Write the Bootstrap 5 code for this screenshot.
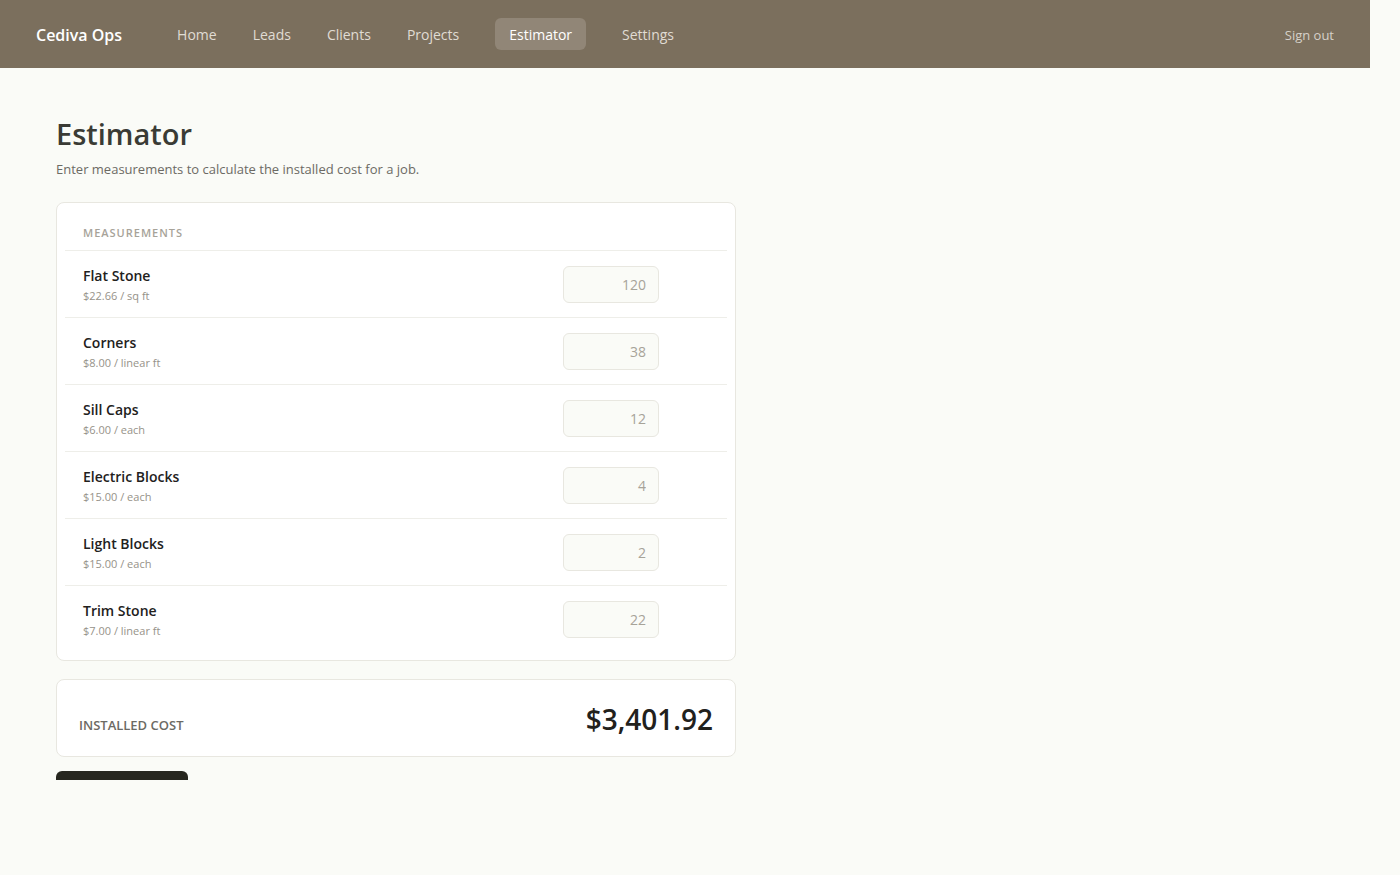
<!DOCTYPE html>
<html lang="en">
<head>
<meta charset="utf-8">
<meta name="viewport" content="width=device-width, initial-scale=1">
<title>Estimator · Cediva Ops</title>
<link href="https://cdn.jsdelivr.net/npm/bootstrap@5.3.0/dist/css/bootstrap.min.css" rel="stylesheet">
<style>
  body { background: #fafbf7; color: #22211c; font-family: "Open Sans", "Noto Sans", sans-serif; font-size: 14px; line-height: 20px; }
  .shell { padding-right: 30px; }
  .topbar { background: #7b6f5d; padding: 18px 36px; min-height: 68px; }
  .topbar .navbar-brand { font-size: 16px; line-height: 24px; font-weight: 600; padding: 2px 0 0; margin-right: 55px; color: #fff; }
  .topbar .nav { gap: 0 36px; }
  .topbar .nav-link { font-size: 14px; line-height: 20px; padding: 7px 0 5px; border-radius: 6px; color: #e0dcd4; }
  .topbar .nav-link:hover { color: #fff; }
  .topbar .nav-link.active { color: #fff; background: #918677; padding-left: 14px; padding-right: 14px; }
  .signout { font-size: 13px; padding-top: 2px; color: #d6d1c9; }
  .content { max-width: 776px; padding: 44px 40px 40px 56px; }
  .title { font-size: 29px; line-height: 44px; font-weight: 600; color: #3a3b35; margin: 0; }
  .intro { font-size: 13px; line-height: 20px; color: #6c6a64; margin: 3px 0 23px; }
  .panel { background: #fff; border: 1px solid #e8e7e0; border-radius: 8px; }
  .measures { padding: 20px 8px 8px; }
  .section-label { font-size: 11px; line-height: 20px; font-weight: 600; letter-spacing: 1px; color: #a7a399; padding: 0 18px 7px; margin: 0; }
  .measure { border-top: 1px solid #eeeee9; padding: 15px 68px 14px 18px; }
  .measure label { font-size: 14px; line-height: 20px; font-weight: 600; }
  .rate { font-size: 11px; line-height: 15px; margin-top: 2px; color: #969289; }
  .measure .form-control { width: 96px; height: 37px; padding: 0 12px; font-size: 14px; background: #fafbf7; border: 1px solid #e8e7e0; border-radius: 6px; }
  .measure .form-control::placeholder { color: #a7a399; }
  .total { padding: 19px 22px 17px; margin-top: 18px; }
  .total-label { font-size: 13px; font-weight: 600; color: #6c6a64; }
  .total-value { font-size: 28px; line-height: 40px; font-weight: 600; }
  .action { display: block; width: 132px; height: 9px; margin-top: 14px; padding: 0; border: 0; border-radius: 6px 6px 0 0; background: #26261f; }
</style>
</head>
<body>
<div class="shell">
  <header class="topbar d-flex align-items-center">
    <a class="navbar-brand" href="#">Cediva Ops</a>
    <nav class="nav me-auto">
      <a class="nav-link" href="#">Home</a>
      <a class="nav-link" href="#">Leads</a>
      <a class="nav-link" href="#">Clients</a>
      <a class="nav-link" href="#">Projects</a>
      <a class="nav-link active" aria-current="page" href="#">Estimator</a>
      <a class="nav-link" href="#">Settings</a>
    </nav>
    <a class="signout text-decoration-none" href="#">Sign out</a>
  </header>
  <main class="content">
    <h1 class="title">Estimator</h1>
    <p class="intro">Enter measurements to calculate the installed cost for a job.</p>
    <form>
      <section class="panel measures">
        <h2 class="section-label">MEASUREMENTS</h2>
        <div class="measure d-flex align-items-center justify-content-between">
          <div><label class="d-block" for="flat">Flat Stone</label><div class="rate">$22.66 / sq ft</div></div>
          <input class="form-control text-end" id="flat" inputmode="decimal" placeholder="120">
        </div>
        <div class="measure d-flex align-items-center justify-content-between">
          <div><label class="d-block" for="corners">Corners</label><div class="rate">$8.00 / linear ft</div></div>
          <input class="form-control text-end" id="corners" inputmode="decimal" placeholder="38">
        </div>
        <div class="measure d-flex align-items-center justify-content-between">
          <div><label class="d-block" for="sills">Sill Caps</label><div class="rate">$6.00 / each</div></div>
          <input class="form-control text-end" id="sills" inputmode="decimal" placeholder="12">
        </div>
        <div class="measure d-flex align-items-center justify-content-between">
          <div><label class="d-block" for="electric">Electric Blocks</label><div class="rate">$15.00 / each</div></div>
          <input class="form-control text-end" id="electric" inputmode="decimal" placeholder="4">
        </div>
        <div class="measure d-flex align-items-center justify-content-between">
          <div><label class="d-block" for="light">Light Blocks</label><div class="rate">$15.00 / each</div></div>
          <input class="form-control text-end" id="light" inputmode="decimal" placeholder="2">
        </div>
        <div class="measure d-flex align-items-center justify-content-between">
          <div><label class="d-block" for="trim">Trim Stone</label><div class="rate">$7.00 / linear ft</div></div>
          <input class="form-control text-end" id="trim" inputmode="decimal" placeholder="22">
        </div>
      </section>
      <section class="panel total d-flex align-items-baseline justify-content-between">
        <span class="total-label">INSTALLED COST</span>
        <output class="total-value p-0">$3,401.92</output>
      </section>
      <button class="action" type="button" aria-label="Save estimate"></button>
    </form>
  </main>
</div>
<script src="https://cdn.jsdelivr.net/npm/bootstrap@5.3.0/dist/js/bootstrap.bundle.min.js"></script>
</body>
</html>
